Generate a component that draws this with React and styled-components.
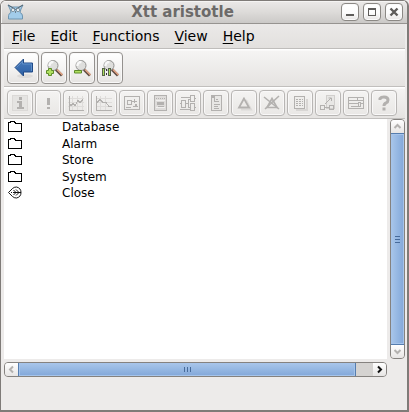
import React from "react";
import styled, { createGlobalStyle } from "styled-components";

const Global = createGlobalStyle`
  *, *::before, *::after { box-sizing: border-box; }
  body { margin: 0; background: #edebea; font-family: "DejaVu Sans", sans-serif; color: #000; }
  button { font: inherit; color: inherit; margin: 0; padding: 0; }
  svg { display: block; }
`;

const Window = styled.div`
  display: flex;
  flex-direction: column;
  min-height: 100vh;
  border: 1px solid #7f7b78;
  border-right-width: 2px;
  border-bottom-width: 2px;
  border-radius: 6px 6px 0 0;
  background: #edebea;
  overflow: hidden;
`;

const TitleBar = styled.header`
  display: flex;
  align-items: center;
  height: 23px;
  padding: 0 4px 0 6px;
  border-bottom: 1px solid #969390;
  background: linear-gradient(#ebe9e8, #dddbd9 50%, #cbc9c7);
  box-shadow: inset 1px 1px #f5f4f3;
`;

const Title = styled.h1`
  flex: 1;
  margin: 0;
  font-size: 15px;
  line-height: 20px;
  font-weight: bold;
  color: #6c6a69;
  text-align: center;
`;

const WindowButtons = styled.div`
  display: flex;
  gap: 4px;
`;

const WindowButton = styled.button`
  display: grid;
  place-items: center;
  width: 18px;
  height: 18px;
  border: 1px solid #8b8884;
  border-radius: 4px;
  background: linear-gradient(#fff, #fcfcfc 55%, #e7e5e4);
  box-shadow: inset 0 0 0 1px #fafafa;
`;

const Client = styled.main`
  flex: 1;
  display: flex;
  flex-direction: column;
  padding: 0 2px 0 3px;
`;

const MenuBar = styled.nav`
  display: flex;
  align-items: center;
  gap: 1px;
  height: 25px;
  padding-left: 1px;
  border-bottom: 1px solid #bfbdbb;
  background: linear-gradient(#ebe9e8, #e2e0de);
`;

const MenuItem = styled.button`
  padding: 0 7px;
  border: 0;
  background: none;
  font-size: 14px;
  line-height: 22px;
  u { text-underline-offset: 2px; text-decoration-thickness: 1px; text-decoration-skip-ink: none; }
`;

const ToolBar = styled.div`
  display: flex;
  align-items: center;
  gap: 2px;
  height: ${(p) => (p.$large ? 38 : 32)}px;
  padding: 0 3px;
  border-bottom: 1px solid #c1bfbd;
  background: linear-gradient(#fff 1px, #f5f4f3 2px, #e5e3e1);
`;

const ToolButton = styled.button`
  display: grid;
  place-items: center;
  flex: none;
  width: ${(p) => (p.$wide ? 32 : 26)}px;
  height: ${(p) => (p.$tall ? 32 : 26)}px;
  border: 1px solid ${(p) => (p.disabled ? "#b8b6b4" : "#94918e")};
  border-radius: 4px;
  color: #b3b1af;
  background: ${(p) =>
    p.disabled ? "linear-gradient(#f4f3f2, #e9e7e5)" : "linear-gradient(#fff, #f5f4f3 50%, #e5e3e1)"};
  box-shadow: inset 0 0 0 1px #f9f8f8;
`;

const Browser = styled.div`
  flex: 1;
  display: grid;
  grid-template-columns: 1fr 15px;
  grid-template-rows: 1fr 15px;
  gap: 3px;
`;

const Tree = styled.ul`
  display: grid;
  align-content: start;
  grid-template-rows: 16px 17px 16px 17px 16px;
  margin: 0;
  padding: 0;
  list-style: none;
  background: #fff;
`;

const TreeRow = styled.li`
  display: flex;
  align-items: center;
  padding-left: 4px;
  gap: 40px;
  font-size: 12px;
  line-height: 16px;
`;

const Scroll = styled.div`
  display: flex;
  flex-direction: ${(p) => (p.$vertical ? "column" : "row")};
  border: 1px solid #85827f;
  border-radius: 4px;
  background: #d5d3d1;
  overflow: hidden;
`;

const ScrollButton = styled.button`
  display: grid;
  place-items: center;
  flex: none;
  width: 13px;
  height: 13px;
  border: 0;
  color: ${(p) => (p.disabled ? "#b4b2b0" : "#111")};
  background: linear-gradient(#fff, #e7e5e4);
`;

const Thumb = styled.div`
  display: grid;
  place-items: center;
  flex: 20 0 0;
  margin: ${(p) => (p.$vertical ? "0 -1px" : "-1px 0")};
  border: 1px solid #557daf;
  color: #476b9b;
  background: linear-gradient(${(p) => (p.$vertical ? "90deg" : "180deg")}, #a9c6ea, #95b7e2 50%, #82a7d9);
  box-shadow: inset 0 0 0 1px #a6c4ea;
`;

const Rest = styled.div`
  flex: 1 0 0;
`;

const Status = styled.footer`
  height: 33px;
`;

const Pixels = ({ size = 18, children }) => (
  <svg width={size} height={size} viewBox={`0 0 ${size} ${size}`} fill="none" stroke="currentColor" shapeRendering="crispEdges" aria-hidden="true">
    {children}
  </svg>
);

const Owl = () => (
  <svg width="17" height="16" viewBox="0 0 17 16" aria-hidden="true">
    <path d="M1.500 15V11.500Q2 9 4 8.500L3 5 1 1l4 2h7l4-2-2 4-1 3.500q2.500 1 2.500 3.500V15z" fill="#a2ccea" stroke="#6f95b0" />
    <path d="M1 1l6 3.500 1.500 1L10 4.500 16 1" fill="none" stroke="#59666f" />
    <circle cx="6" cy="6" r="1.700" fill="#e2edf3" stroke="#6b7a85" strokeWidth=".7" />
    <circle cx="11" cy="6" r="1.700" fill="#e2edf3" stroke="#6b7a85" strokeWidth=".7" />
    <path d="M8 7h1v2H8z" fill="#6c8190" />
  </svg>
);

const BackArrow = () => (
  <svg width="22" height="22" viewBox="0 0 22 22" aria-hidden="true">
    <defs>
      <linearGradient id="arrow" x2="0" y2="1"><stop stopColor="#4b7dbd" /><stop offset="1" stopColor="#2c5fa3" /></linearGradient>
    </defs>
    <ellipse cx="13" cy="19" rx="8" ry="2" fill="#dddbd9" />
    <path d="M3 10.500l8.500-8.500v4h9v9h-9v4z" fill="url(#arrow)" stroke="#204a87" strokeLinejoin="round" />
    <path d="M4.500 10.500l6-6V7h9v7" fill="none" stroke="#5f8fc8" />
  </svg>
);

const Magnifier = ({ children }) => (
  <svg width="18" height="18" viewBox="0 0 18 18" aria-hidden="true">
    <path d="M11 10.500l6 6" stroke="#5f4b42" strokeWidth="3" />
    <path d="M12 10.500l5.500 5.500" stroke="#e9a988" strokeWidth="1.400" />
    <circle cx="8" cy="6.500" r="5" fill="#dededc" stroke="#90908e" />
    <path d="M4.500 7a3.500 3.500 0 014-4" fill="none" stroke="#f8f8f8" strokeWidth="2.500" />
    {children}
  </svg>
);

const ZoomIn = () => (
  <Magnifier>
    <path d="M3.500 9.500h3v2h2v3h-2v2h-3v-2h-2v-3h2z" fill="#b0e060" stroke="#5e8c2a" />
  </Magnifier>
);
const ZoomOut = () => (
  <Magnifier>
    <path d="M1.500 11.500h7v2.500h-7z" fill="#b0e060" stroke="#5e8c2a" />
  </Magnifier>
);
const ZoomReset = () => (
  <Magnifier>
    <path d="M1 9h3v8H1zM7 9h3v8H7z" fill="#58644a" />
    <path d="M2.500 10v6M8.500 10v6" stroke="#a8db5a" />
    <path d="M5 10h1v2H5zM5 14h1v2H5z" fill="#333" />
  </Magnifier>
);

const Bars = ({ vertical }) => (
  <svg width="7" height="7" viewBox="0 0 7 7" stroke="currentColor" shapeRendering="crispEdges" aria-hidden="true">
    <path d={vertical ? "M1 .5h5M1 3.500h5M1 6.500h5" : "M.5 1v5M3.500 1v5M6.500 1v5"} />
  </svg>
);

const Chevron = ({ d }) => (
  <svg width="9" height="9" viewBox="0 0 9 9" fill="none" stroke="currentColor" strokeWidth="2" aria-hidden="true">
    <path d={d} />
  </svg>
);

const Folder = () => (
  <Pixels size={14}>
    <path d="M.5 11.500v-9h2v-1h4v1h1v1h6v8z" />
  </Pixels>
);

const CloseLeaf = () => (
  <svg width="14" height="14" viewBox="0 0 14 14" fill="none" stroke="#000" aria-hidden="true">
    <path d="M.5 6.500l4-4q1.500-1.500 4-1.500 4.500 1 4.500 5.500t-4.500 5.500q-2.500 0-4-1.500z" strokeWidth=".9" />
    <path d="M3 6.500h1M5 6.500h8M5.500 4l2.500 2.500L5.500 9M8 3.500l3 3-3 3" strokeWidth=".9" />
  </svg>
);

const tools = [
  ["Information", <><path d="M1.500 1.500h15v15h-15z" stroke="#dbd9d7" fill="#e5e4e2" /><path d="M8 3h3v3H8zM6 7h5v6h2v2H6v-2h2V9H6z" fill="currentColor" stroke="none" /></>],
  ["Alarms", <path d="M8 4h3v7H8zM8 13h3v2H8z" fill="currentColor" stroke="none" />],
  ["Trend", <><path d="M1 4.500h16M1 8.500h16M1 12.500h16M5.500 2v14M10.500 2v14M15.500 2v14" stroke="#dedcda" /><path d="M2.500 2v14.500H17M2 8.500l2 3 2-2 2 2 3-5 2 2 3-3" /></>],
  ["History", <><path d="M1 4.500h16M1 8.500h16M1 12.500h16M5.500 2v14M10.500 2v14" stroke="#dedcda" /><path d="M1.500 2v14.500H17M2 8.500l3-3 3 3h3l3 4h3" /></>],
  ["Graph", <><path d="M1.500 2.500h15v13h-15zM4.500 6.500h4v4h-4zM11.500 5v4M9 7.500h5M3 13.500h5M10 12.500h5" /><path d="M12 10h2v3h-2z" fill="currentColor" stroke="none" /></>],
  ["Class graph", <><path d="M3.500 1.500h12v15h-12z" fill="#dedcda" /><path d="M5 4.500h9" strokeDasharray="1 1" /><path d="M5 6.500h9M5 13.500h9" stroke="#f1f0ef" /><path d="M6 8h7v3H6zM7 12h6v1H7z" fill="currentColor" stroke="none" /></>],
  ["Function plan", <><path d="M2.500 6.500h4v7h-4zM11.500 1.500h4v6h-4zM11.500 9.500h4v7h-4zM2 3.500h9M7 9.500h3M9.500 5.500h2M9.500 5v8h2M1 15.500h10M16 4.500h1M16 13.500h1M1 9.500h1" /></>],
  ["Document", <><path d="M4.500 1.500h10v15h-10z" fill="#e8e7e5" /><path d="M5 2h3v2H5z" fill="currentColor" stroke="none" /><path d="M7.500 4v4M9 5.500h2M8 7.500h4M7 10.500h6M7 12.500h4M7 14.500h5" /></>],
  ["Node", <g shapeRendering="geometricPrecision"><path d="M6 15.500h10L11 6" stroke="#dcdad8" strokeWidth="2" /><path d="M9 4.500L4 13.500h10z" strokeWidth="1.800" fill="#eceae8" /></g>],
  ["Block", <g shapeRendering="geometricPrecision"><path d="M9 4.500L4 13.500h10z" strokeWidth="1.600" /><path d="M1 3l15 12M16 2L2 15" strokeWidth="1.600" /></g>],
  ["Objects", <><path d="M5 15.500h10.500V5" stroke="#d8d6d4" strokeWidth="2" /><path d="M3.500 2.500h10v12h-10z" fill="#eeedeb" /><path d="M5 5.500h7M5 7.500h7M5 9.500h7M5 11.500h7" strokeDasharray="2 1" /></>],
  ["Cross references", <><path d="M7.500 1.500h8v13h-8z" fill="#e8e7e5" stroke="#d1cfcd" /><path d="M1.500 11.500h4v4h-4zM6 13.500h5M10.500 11.500h4v4h-4z" /><path d="M6 10l6-6M9.500 4H12.500v3" shapeRendering="geometricPrecision" /></>],
  ["Components", <><path d="M1.500 3.500h15v11h-15zM1 6.500h15M1 9.500h15M10.500 3v3M4 12.500h9" /><path d="M11.500 8.500h2v4h-2z" fill="#eeedeb" /></>],
];

const menus = ["File", "Edit", "Functions", "View", "Help"];
const nodes = ["Database", "Alarm", "Store", "System", "Close"];

export default function App() {
  return (
    <>
      <Global />
      <Window>
        <TitleBar>
          <Owl />
          <Title>Xtt aristotle</Title>
          <WindowButtons>
            <WindowButton aria-label="Minimize"><Pixels size={14}><path d="M3 10h8" strokeWidth="2" stroke="#5e5c5a" /></Pixels></WindowButton>
            <WindowButton aria-label="Maximize"><Pixels size={14}><path d="M3.500 4v6.500h7V4" stroke="#5e5c5a" /><path d="M3 4h8" strokeWidth="2" stroke="#5e5c5a" /></Pixels></WindowButton>
            <WindowButton aria-label="Close window">
              <svg width="14" height="14" viewBox="0 0 14 14" aria-hidden="true"><path d="M3.500 3.500l7 7M10.500 3.500l-7 7" stroke="#5e5c5a" strokeWidth="2.400" /></svg>
            </WindowButton>
          </WindowButtons>
        </TitleBar>
        <Client>
          <MenuBar aria-label="Main menu">
            {menus.map((m) => (
              <MenuItem key={m}><u>{m[0]}</u>{m.slice(1)}</MenuItem>
            ))}
          </MenuBar>
          <ToolBar $large>
            <ToolButton $wide $tall aria-label="Back"><BackArrow /></ToolButton>
            <ToolButton $tall aria-label="Zoom in"><ZoomIn /></ToolButton>
            <ToolButton $tall aria-label="Zoom out"><ZoomOut /></ToolButton>
            <ToolButton $tall aria-label="Zoom reset"><ZoomReset /></ToolButton>
          </ToolBar>
          <ToolBar>
            {tools.map(([name, art]) => (
              <ToolButton key={name} disabled aria-label={name}><Pixels>{art}</Pixels></ToolButton>
            ))}
            <ToolButton disabled aria-label="Help">
              <svg width="18" height="18" viewBox="0 0 18 18" fill="none" stroke="currentColor" strokeWidth="3" aria-hidden="true">
                <path d="M5 6V4.500Q6 3 9 3q4 0 4 3 0 2-2 3-2 .8-2 3M9 13.500v3" />
              </svg>
            </ToolButton>
          </ToolBar>
          <Browser>
            <Tree>
              {nodes.map((n) => (
                <TreeRow key={n}>{n === "Close" ? <CloseLeaf /> : <Folder />}{n}</TreeRow>
              ))}
            </Tree>
            <Scroll $vertical>
              <ScrollButton disabled aria-label="Scroll up"><Chevron d="M1.500 6l3-3 3 3" /></ScrollButton>
              <Thumb $vertical><Bars vertical /></Thumb>
              <ScrollButton disabled aria-label="Scroll down"><Chevron d="M1.500 3l3 3 3-3" /></ScrollButton>
            </Scroll>
            <Scroll>
              <ScrollButton disabled aria-label="Scroll left"><Chevron d="M6 1.500l-3 3 3 3" /></ScrollButton>
              <Thumb><Bars /></Thumb>
              <Rest />
              <ScrollButton aria-label="Scroll right"><Chevron d="M3 1.500l3 3-3 3" /></ScrollButton>
            </Scroll>
          </Browser>
          <Status />
        </Client>
      </Window>
    </>
  );
}
